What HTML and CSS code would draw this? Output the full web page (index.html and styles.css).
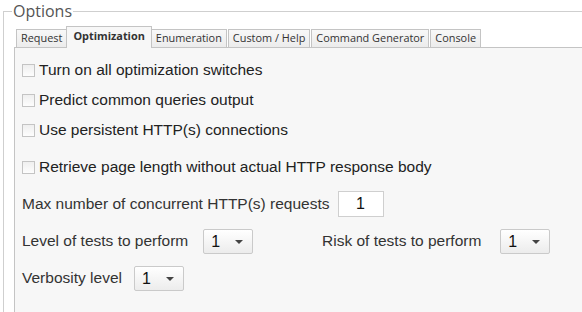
FILE: index.html
```html
<!DOCTYPE html>
<html>
<head>
    <title>Options</title>
    <link rel="stylesheet" href="styles.css">
</head>
<body>
    <div class="container">
        <fieldset class="options">
            <legend>Options</legend>

            <div class="tabs">
                <span class="tab">Request</span>
                <span class="tab active">Optimization</span>
                <span class="tab">Enumeration</span>
                <span class="tab">Custom / Help</span>
                <span class="tab">Command Generator</span>
                <span class="tab">Console</span>
            </div>

            <div class="panel">
                <div class="checks">
                    <label class="row"><input type="checkbox" class="check"> Turn on all optimization switches</label>
                    <label class="row"><input type="checkbox" class="check"> Predict common queries output</label>
                    <label class="row"><input type="checkbox" class="check"> Use persistent HTTP(s) connections</label>
                </div>

                <label class="row"><input type="checkbox" class="check"> Retrieve page length without actual HTTP response body</label>

                <div class="row">
                    <span class="label">Max number of concurrent HTTP(s) requests</span>
                    <input type="text" class="num" value="1">
                </div>

                <div class="row">
                    <div class="col">
                        <span class="label">Level of tests to perform</span>
                        <span class="select">1</span>
                    </div>
                    <div class="col">
                        <span class="label">Risk of tests to perform</span>
                        <span class="select">1</span>
                    </div>
                </div>

                <div class="row">
                    <span class="label">Verbosity level</span>
                    <span class="select">1</span>
                </div>
            </div>
        </fieldset>
    </div>
</body>
</html>
```

FILE: styles.css
```css
* {
    margin: 0;
    padding: 0;
    box-sizing: border-box;
}

body {
    background: #fff;
    font-family: "Liberation Sans", Arial, sans-serif;
    color: #333;
}

.container {
    width: 582px;
    height: 312px;
    overflow: hidden;
}

.options {
    margin: 0 3px;
    height: 340px;
    border: 1px solid #cfcfcf;
    padding: 4px 11px 0 10px;
}

.options legend {
    font-family: "Open Sans", sans-serif;
    font-size: 16px;
    line-height: 22px;
    color: #555;
    margin-left: -2px;
    padding: 0 1px;
}

.tabs {
    display: flex;
    align-items: flex-end;
    margin-left: 2px;
    height: 21px;
    position: relative;
    z-index: 1;
}

.tab {
    font-family: "Open Sans", sans-serif;
    font-size: 10.9px;
    line-height: 16px;
    color: #333;
    height: 18px;
    padding: 0 4px;
    margin-right: 1px;
    border: 1px solid #c4c4c4;
    border-bottom: none;
    background: linear-gradient(#f8f8f8, #ececec);
}

.tab.active {
    height: 22px;
    margin: 0 -1px -1px -2px;
    padding: 0 6px;
    line-height: 18px;
    font-weight: bold;
    background: #f7f7f7;
}

.panel {
    height: 300px;
    background: #f7f7f7;
    border: 1px solid #c4c4c4;
    padding: 7px 7px 0 7px;
    display: flex;
    flex-direction: column;
    gap: 7px;
    font-size: 15.5px;
}

.checks {
    display: flex;
    flex-direction: column;
}

.row {
    display: flex;
    align-items: center;
    height: 30px;
    color: #222;
}

.check {
    appearance: none;
    width: 13px;
    height: 13px;
    margin-right: 4px;
    border: 1px solid #c4c4c4;
    background: linear-gradient(#efefef, #fdfdfd);
}

.label {
    color: #333;
}

.num {
    width: 46px;
    height: 26px;
    margin-left: 8px;
    border: 1px solid #cfcfcf;
    background: #fff;
    text-align: center;
    font-family: "Liberation Sans", Arial, sans-serif;
    font-size: 16px;
    color: #111;
}

.col {
    display: flex;
    align-items: center;
    width: 300px;
}

.col .select {
    margin-left: 15px;
}

.col + .col .select {
    margin-left: 19px;
}

.select {
    position: relative;
    width: 50px;
    height: 25px;
    margin-left: 12px;
    padding-left: 7px;
    line-height: 23px;
    border: 1px solid #cacaca;
    border-radius: 2px;
    background: linear-gradient(#fff, #ececec);
    color: #111;
    font-size: 16px;
}

.select::after {
    content: "";
    position: absolute;
    right: 9px;
    top: 10px;
    border-left: 4px solid transparent;
    border-right: 4px solid transparent;
    border-top: 4px solid #444;
}
```
